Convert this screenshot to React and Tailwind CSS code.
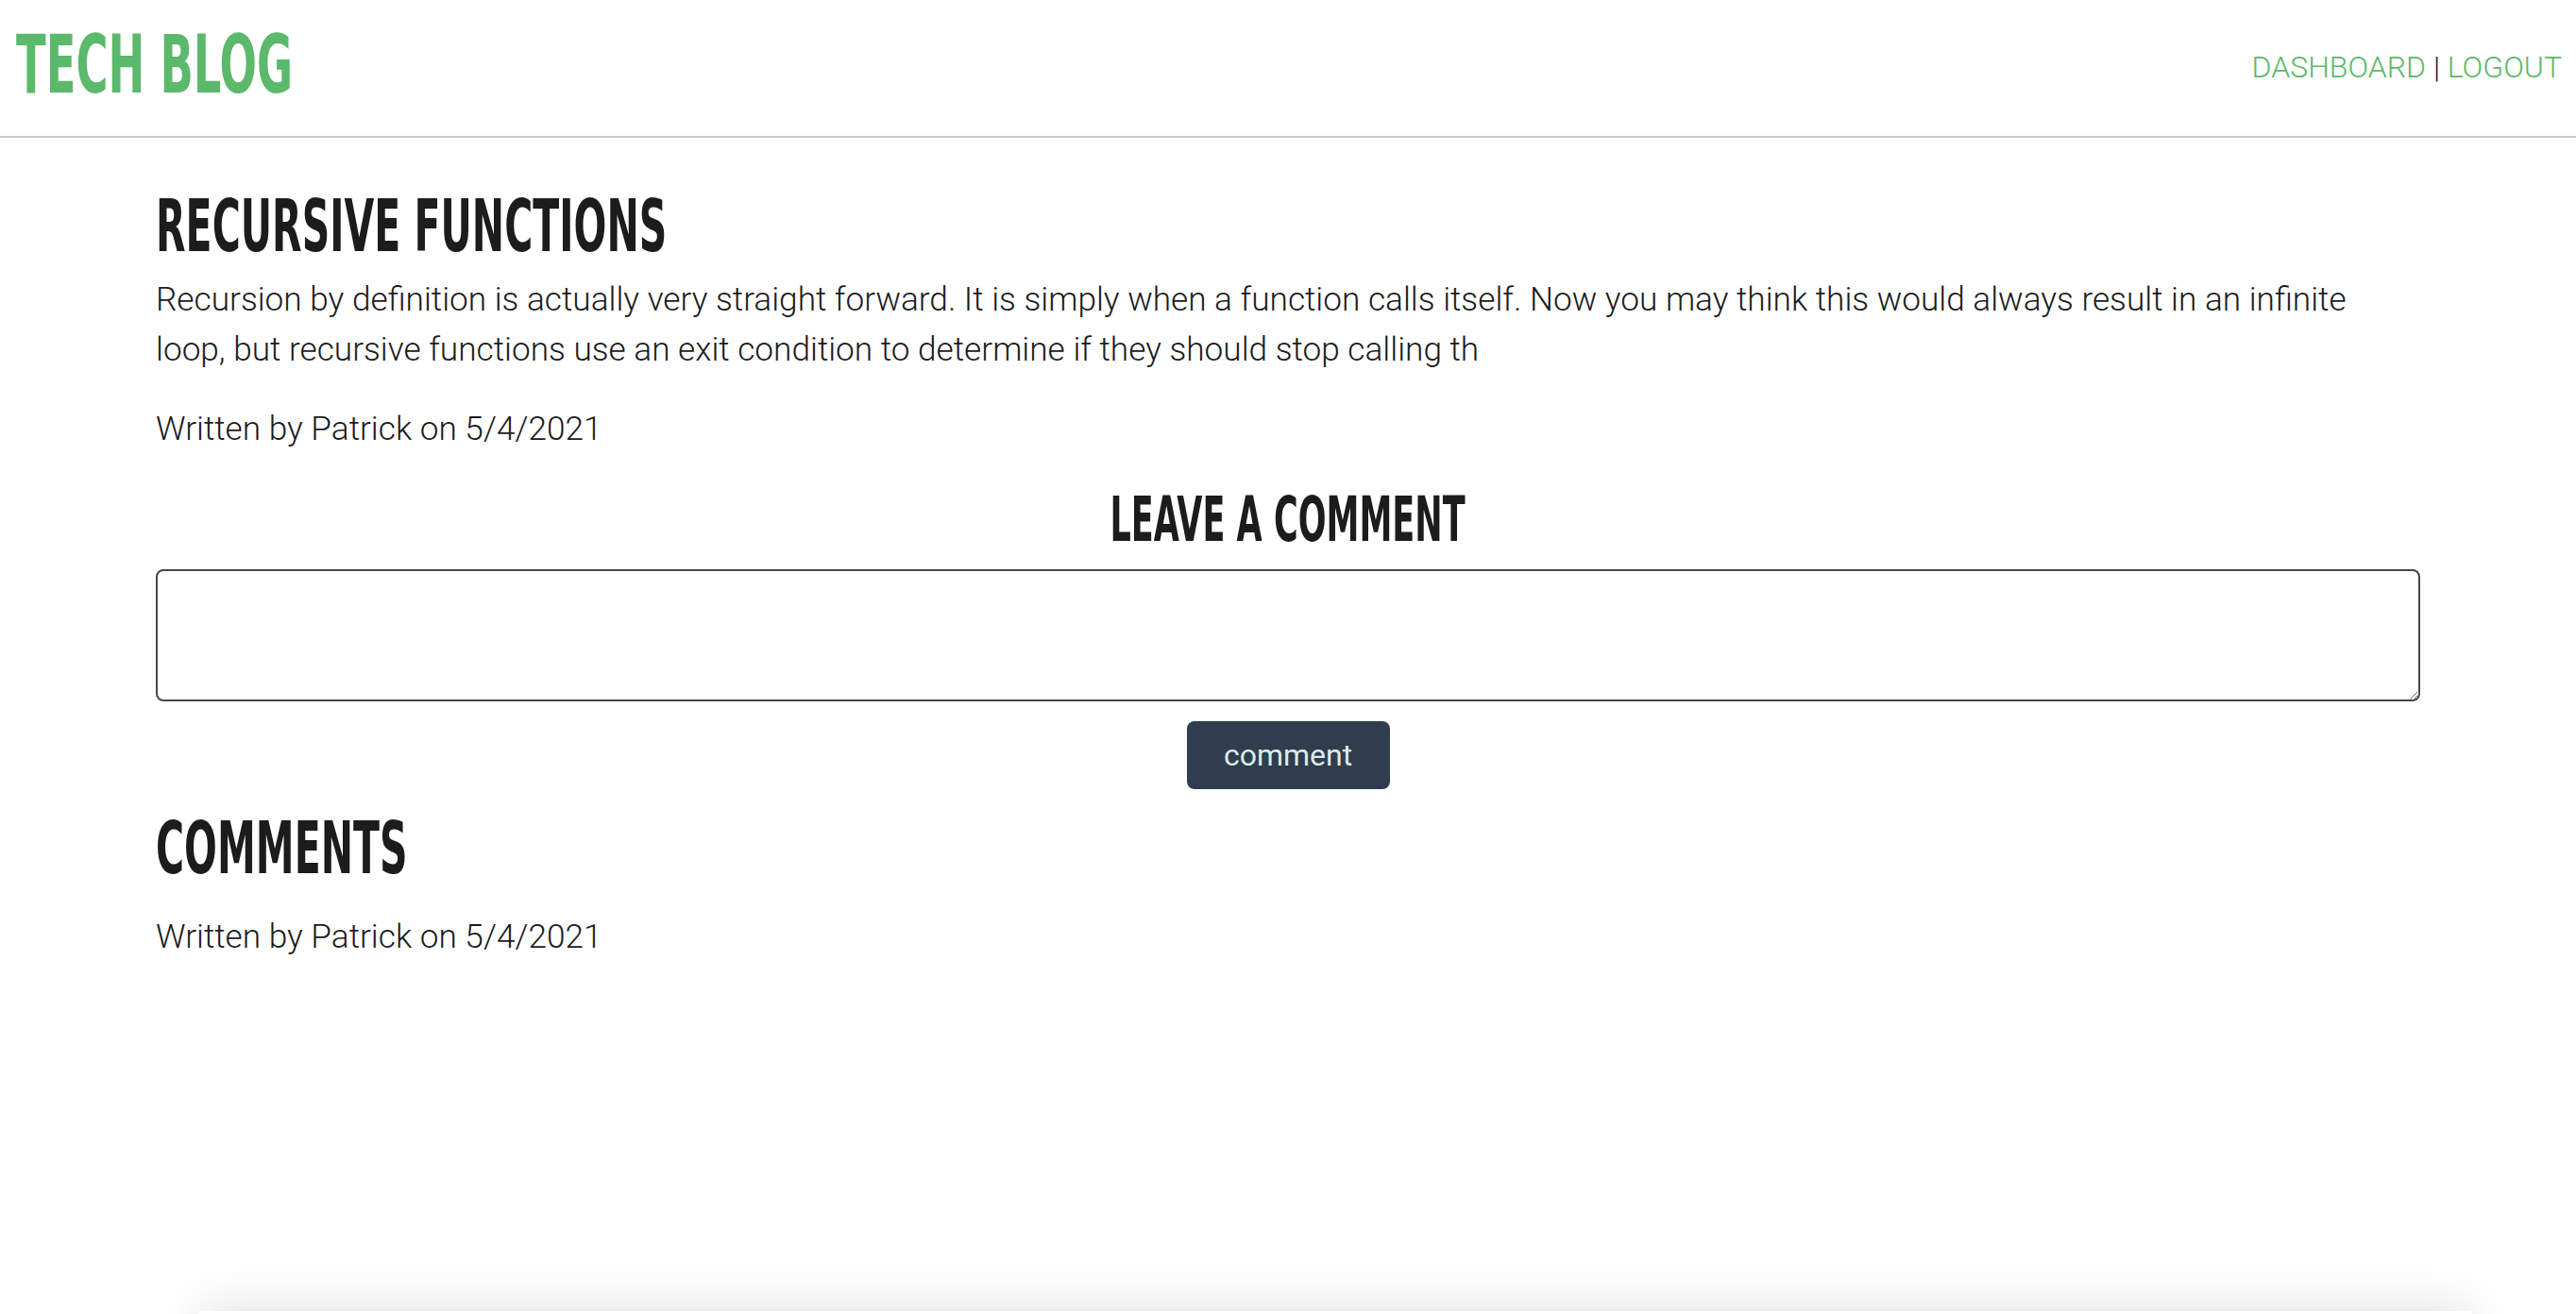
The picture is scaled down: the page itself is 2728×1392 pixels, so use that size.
export default function App() {
  const heading = { fontFamily: '"Liberation Sans Narrow", "DejaVu Sans Condensed", "Liberation Sans", sans-serif' }
  const body = { fontFamily: 'Roboto, "Liberation Sans", sans-serif' }

  return (
    <div className="min-h-screen bg-white text-[#1c1c1c]" style={body}>
      <header className="h-[146px] border-b-2 border-[#c9c9c9] flex items-start justify-between">
        <a
          href="#/"
          className="mt-[25px] ml-[17px] inline-block origin-left scale-x-[0.6] text-[86px] leading-none font-bold text-[#5ab96a]"
          style={heading}
        >
          TECH BLOG
        </a>
        <nav className="mt-[55px] mr-[15px] text-[32px] leading-none font-light text-[#5ab96a]">
          <a href="#/dashboard">DASHBOARD</a>
          <span className="text-[#1c1c1c]"> | </span>
          <a href="#/logout">LOGOUT</a>
        </nav>
      </header>

      <main className="mx-[165px]">
        <h2
          className="mt-[56px] inline-block origin-left scale-x-[0.6] text-[76px] leading-none font-bold whitespace-nowrap"
          style={heading}
        >
          RECURSIVE FUNCTIONS
        </h2>
        <p className="mt-[13px] text-[35.2px] leading-[52.8px] font-light">
          Recursion by definition is actually very straight forward. It is simply when a function calls itself. Now you may think this would always result in an infinite
          <br />
          loop, but recursive functions use an exit condition to determine if they should stop calling th
        </p>
        <p className="mt-[31px] text-[35.2px] leading-[52.8px] font-light">Written by Patrick on 5/4/2021</p>

        <div className="mt-[38px] text-center">
          <h3
            className="inline-block origin-center scale-x-[0.6] text-[65px] leading-none font-bold whitespace-nowrap"
            style={heading}
          >
            LEAVE A COMMENT
          </h3>
        </div>
        <textarea className="mt-[20px] block w-full h-[140px] rounded-[8px] border-2 border-[#474747] bg-white" />
        <div className="mt-[21px] flex justify-center">
          <button className="w-[215px] h-[72px] rounded-[8px] bg-[#2f3d4e] text-[32px] text-[#dcebea]">
            comment
          </button>
        </div>

        <h2
          className="mt-[25px] inline-block origin-left scale-x-[0.6] text-[76px] leading-none font-bold"
          style={heading}
        >
          COMMENTS
        </h2>
        <p className="mt-[29px] text-[35.2px] leading-[52.8px] font-light">Written by Patrick on 5/4/2021</p>
      </main>

      <footer className="mt-[370px] ml-[210px] mr-[110px] h-[120px] bg-white shadow-[0_-8px_50px_rgba(0,0,0,0.10)]" />
    </div>
  )
}
